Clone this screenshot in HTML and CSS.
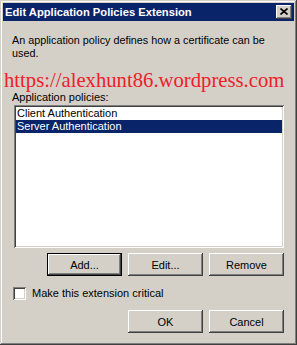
FILE: index.html
```html
<!doctype html>
<html lang="en">
<head>
	<meta charset="UTF-8">
	<title>Edit Application Policies Extension</title>
	<link rel="stylesheet" href="styles.css">
</head>
<body>
	<div class="window">
		<div class="titlebar">
			<span class="title">Edit Application Policies Extension</span>
			<div class="close">
				<svg width="8" height="7" viewBox="0 0 8 7"><path d="M0.5 0.5 L7.5 6.5 M7.5 0.5 L0.5 6.5" stroke="#000" stroke-width="1.6" fill="none"/></svg>
			</div>
		</div>
		<div class="content">
			<p class="intro">An application policy defines how a certificate can be used.</p>
			<div class="watermark">https://alexhunt86.wordpress.com</div>
			<div class="label">Application policies:</div>
			<div class="listbox">
				<div class="item">Client Authentication</div>
				<div class="item selected">Server Authentication</div>
			</div>
			<div class="buttons">
				<div class="btn default">Add...</div>
				<div class="btn">Edit...</div>
				<div class="btn">Remove</div>
			</div>
			<label class="check">
				<span class="box"></span>
				Make this extension critical
			</label>
			<div class="buttons footer">
				<div class="btn">OK</div>
				<div class="btn">Cancel</div>
			</div>
		</div>
	</div>
</body>
</html>
```

FILE: styles.css
```css
body {
  margin:0;
  font:11px "Liberation Sans", Arial, sans-serif;
  color:#000;
}

.window {
  width:297px;
  height:345px;
  box-sizing:border-box;
  padding:3px;
  background:#d4d0c8;
  box-shadow:inset -1px -1px #404040, inset 1px 1px #d4d0c8, inset -2px -2px #808080, inset 2px 2px #fff;
}

.titlebar {
  height:18px;
  background:#0a246a;
  display:flex;
  align-items:center;
  justify-content:space-between;
  padding:0 2px 0 2px;
}

.title {
  color:#fff;
  font-weight:bold;
  font-size:11.2px;
}

.close {
  width:16px;
  height:14px;
  box-sizing:border-box;
  background:#d4d0c8;
  box-shadow:inset -1px -1px #404040, inset 1px 1px #fff, inset -2px -2px #808080;
  display:flex;
  align-items:center;
  justify-content:center;
  padding-bottom:1px;
}

.content {
  padding:13px 10px 0 9px;
  display:flex;
  flex-direction:column;
}

.intro {
  margin:0;
  line-height:13px;
  width:262px;
  font-size:10.8px;
}

.watermark {
  font:20.7px "Liberation Serif", "Times New Roman", serif;
  color:#ee2028;
  line-height:22px;
  margin:9px 0 0 -8px;
  white-space:nowrap;
}

.label {
  line-height:13px;
  margin-bottom:1px;
}

.listbox {
  margin-left:2px;
  height:143px;
  box-sizing:border-box;
  padding:2px;
  background:#fff;
  box-shadow:inset 1px 1px #808080, inset -1px -1px #fff, inset 2px 2px #404040, inset -2px -2px #d4d0c8;
}

.item {
  line-height:13px;
  padding-left:1px;
}

.item.selected {
  background:#0a246a;
  color:#fff;
}

.buttons {
  display:flex;
  justify-content:flex-end;
  gap:6px;
  margin-top:5px;
}

.footer {
  margin-top:10px;
}

.btn {
  width:75px;
  height:23px;
  box-sizing:border-box;
  display:flex;
  align-items:center;
  justify-content:center;
  box-shadow:inset -1px -1px #404040, inset 1px 1px #fff, inset -2px -2px #808080, inset 2px 2px #d4d0c8;
}

.btn.default {
  box-shadow:inset 0 0 0 1px #000, inset -2px -2px #404040, inset 2px 2px #fff, inset -3px -3px #808080;
}

.check {
  display:flex;
  align-items:center;
  gap:6px;
  margin:11px 0 0 1px;
  line-height:13px;
}

.box {
  width:13px;
  height:13px;
  box-sizing:border-box;
  background:#fff;
  box-shadow:inset 1px 1px #808080, inset -1px -1px #fff, inset 2px 2px #404040, inset -2px -2px #d4d0c8;
}
```
